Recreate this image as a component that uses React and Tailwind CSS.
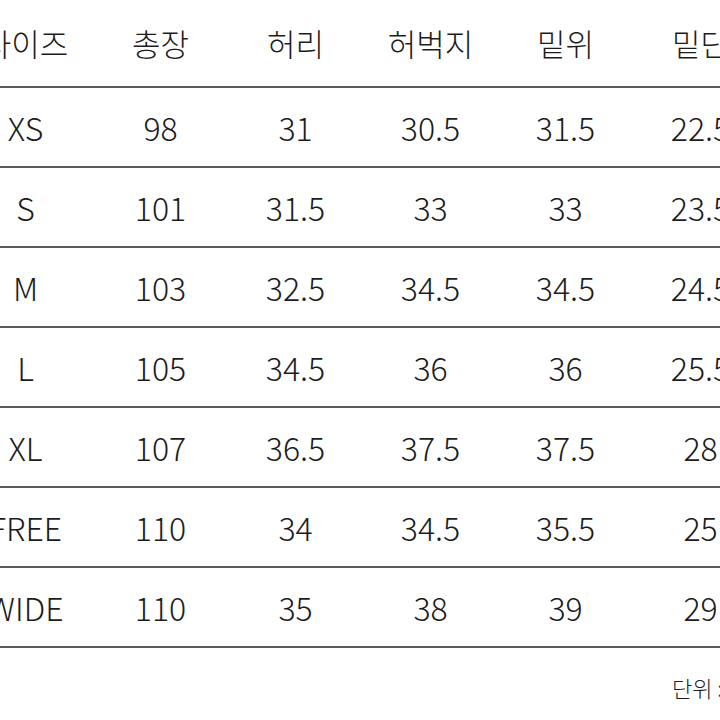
import React from 'react';

const headers = ['사이즈', '총장', '허리', '허벅지', '밑위', '밑단'];

const rows = [
  ['XS', '98', '31', '30.5', '31.5', '22.5'],
  ['S', '101', '31.5', '33', '33', '23.5'],
  ['M', '103', '32.5', '34.5', '34.5', '24.5'],
  ['L', '105', '34.5', '36', '36', '25.5'],
  ['XL', '107', '36.5', '37.5', '37.5', '28'],
  ['FREE', '110', '34', '34.5', '35.5', '25'],
  ['WIDE', '110', '35', '38', '39', '29'],
];

const App = () => {
  return (
    <div
      className="w-[720px] h-[720px] overflow-hidden bg-white text-[#1c1c1c] font-light"
      style={{ fontFamily: '"Noto Sans CJK KR", "Noto Sans", sans-serif' }}
    >
      <div className="ml-[-42px] w-[810px]">
        <div className="grid grid-cols-[repeat(6,135px)] h-[88px] items-center border-b-2 border-[#5a5a5a]">
          {headers.map((h) => (
            <div key={h} className="text-center text-[31px] leading-none whitespace-nowrap pb-[2px]">
              {h}
            </div>
          ))}
        </div>
        {rows.map((row) => (
          <div
            key={row[0]}
            className="grid grid-cols-[repeat(6,135px)] h-[80px] items-center border-b-2 border-[#5a5a5a]"
          >
            {row.map((cell, i) => (
              <div key={i} className="text-center text-[32px] leading-none whitespace-nowrap">
                {cell}
              </div>
            ))}
          </div>
        ))}
        <div className="pl-[714px] pt-[28px] text-[22px] leading-none whitespace-nowrap">
          단위 : cm
        </div>
      </div>
    </div>
  );
};

export default App;
